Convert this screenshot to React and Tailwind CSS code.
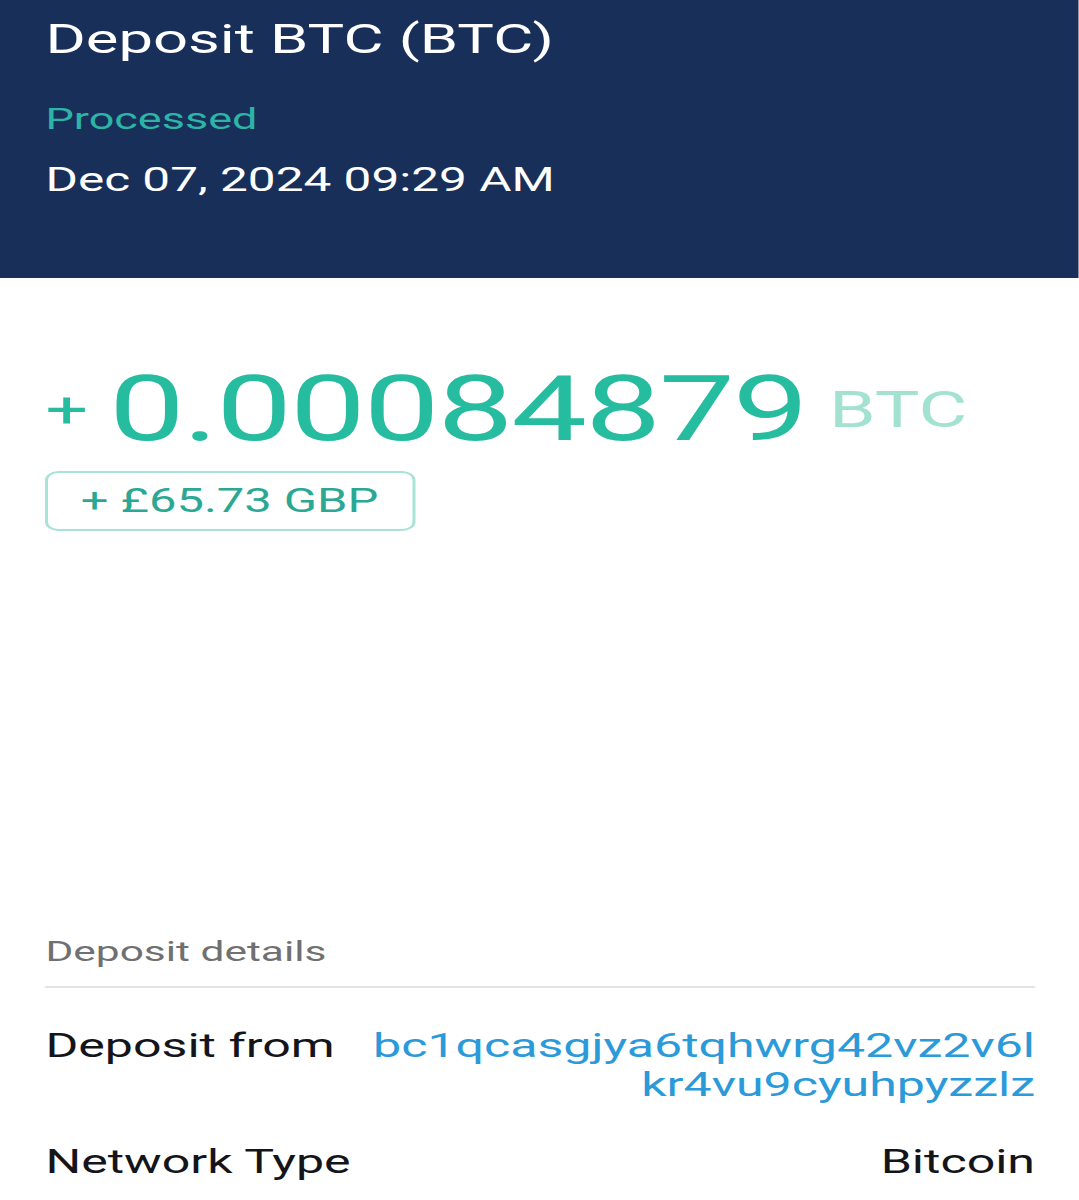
import React from "react";

// Transaction detail screen. The reference is rendered horizontally stretched,
// so the whole page is laid out at natural width and widened with scale-x.
const deposit = {
  title: "Deposit BTC (BTC)",
  status: "Processed",
  date: "Dec 07, 2024 09:29 AM",
  amount: "0.00084879",
  asset: "BTC",
  fiat: "+ £65.73 GBP",
  addressLines: ["bc1qcasgjya6tqhwrg42vz2v6l", "kr4vu9cyuhpyzzlz"],
  network: "Bitcoin",
};

function DetailRow({ label, children }) {
  return (
    <div className="flex justify-between items-start mt-[38px] text-[33.4px] leading-[39px]">
      <div className="text-[#14151a] whitespace-nowrap">{label}</div>
      <div className="text-right">{children}</div>
    </div>
  );
}

export default function App() {
  return (
    <div className="w-[1079px] h-[1200px] overflow-hidden bg-white">
      <div className="w-[719.33px] origin-top-left scale-x-150 font-['Roboto',sans-serif]">
        {/* Header */}
        <div className="h-[278px] bg-[#182f5a] pl-[30.3px] pt-[15px]">
          <div className="text-white text-[41px] leading-[48px] whitespace-nowrap">{deposit.title}</div>
          <div className="text-[#2cb5a6] text-[30px] leading-[36px] mt-[37.5px]">{deposit.status}</div>
          <div className="text-white text-[33px] leading-[40px] mt-[23px] whitespace-nowrap">{deposit.date}</div>
        </div>

        <div className="pl-[30.3px] pr-[29.3px]">
          {/* Amount */}
          <div className="flex items-center mt-[87px] whitespace-nowrap">
            <span className="text-[#26bc9f] text-[50px] leading-none">+</span>
            <span className="ml-[14px] text-[#26bc9f] text-[90px] leading-none tracking-[-1.4px]">
              {deposit.amount}
            </span>
            <span className="ml-[15px] text-[#a3e2d1] text-[50px] leading-none">{deposit.asset}</span>
          </div>

          <div className="mt-[16px] inline-flex items-center h-[60px] pl-[21.5px] pr-[23px] border-2 border-[#a9e2d6] rounded-[9px] text-[#2aa893] text-[32.6px] whitespace-nowrap">
            {deposit.fiat}
          </div>

          {/* Details */}
          <div className="mt-[404px] text-[#707070] text-[28.3px] leading-[34px]">Deposit details</div>
          <div className="mt-[17px] h-[2px] bg-[#e3e3e3]" />

          <DetailRow label="Deposit from">
            <div className="text-[#2b9ad9]">
              {deposit.addressLines.map((line) => (
                <div key={line}>{line}</div>
              ))}
            </div>
          </DetailRow>

          <DetailRow label="Network Type">
            <div className="text-[#14151a]">{deposit.network}</div>
          </DetailRow>
        </div>
      </div>
    </div>
  );
}
